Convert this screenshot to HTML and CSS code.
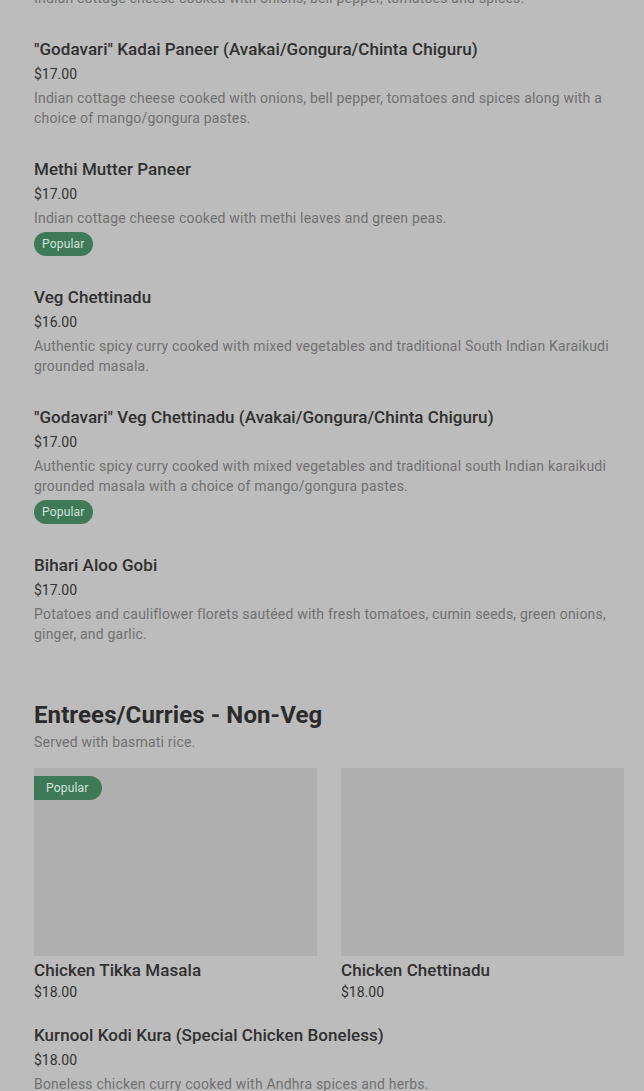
FILE: index.html
```html
<!DOCTYPE html>
<html lang="en">
<head>
    <meta charset="UTF-8">
    <meta name="viewport" content="width=device-width, initial-scale=1.0">
    <title>Menu</title>
    <link rel="stylesheet" href="styles.css">
</head>
<body>
    <main class="menu">
        <section class="category">
            <div class="item">
                <h3 class="item-title">Kadai Paneer</h3>
                <div class="item-price">$16.00</div>
                <p class="item-desc">Indian cottage cheese cooked with onions, bell pepper, tomatoes and spices.</p>
            </div>

            <div class="item">
                <h3 class="item-title">"Godavari" Kadai Paneer (Avakai/Gongura/Chinta Chiguru)</h3>
                <div class="item-price">$17.00</div>
                <p class="item-desc">Indian cottage cheese cooked with onions, bell pepper, tomatoes and spices along with a choice of mango/gongura pastes.</p>
            </div>

            <div class="item">
                <h3 class="item-title">Methi Mutter Paneer</h3>
                <div class="item-price">$17.00</div>
                <p class="item-desc">Indian cottage cheese cooked with methi leaves and green peas.</p>
                <span class="badge">Popular</span>
            </div>

            <div class="item">
                <h3 class="item-title">Veg Chettinadu</h3>
                <div class="item-price">$16.00</div>
                <p class="item-desc">Authentic spicy curry cooked with mixed vegetables and traditional South Indian Karaikudi grounded masala.</p>
            </div>

            <div class="item">
                <h3 class="item-title">"Godavari" Veg Chettinadu (Avakai/Gongura/Chinta Chiguru)</h3>
                <div class="item-price">$17.00</div>
                <p class="item-desc">Authentic spicy curry cooked with mixed vegetables and traditional south Indian karaikudi grounded masala with a choice of mango/gongura pastes.</p>
                <span class="badge">Popular</span>
            </div>

            <div class="item">
                <h3 class="item-title">Bihari Aloo Gobi</h3>
                <div class="item-price">$17.00</div>
                <p class="item-desc">Potatoes and cauliflower florets sautéed with fresh tomatoes, cumin seeds, green onions, ginger, and garlic.</p>
            </div>
        </section>

        <section class="category">
            <h2 class="category-title">Entrees/Curries - Non-Veg</h2>
            <p class="category-note">Served with basmati rice.</p>

            <div class="cards">
                <div class="card">
                    <div class="card-photo">
                        <span class="card-badge">Popular</span>
                    </div>
                    <h3 class="item-title">Chicken Tikka Masala</h3>
                    <div class="item-price">$18.00</div>
                </div>
                <div class="card">
                    <div class="card-photo"></div>
                    <h3 class="item-title">Chicken Chettinadu</h3>
                    <div class="item-price">$18.00</div>
                </div>
            </div>

            <div class="item item-after-cards">
                <h3 class="item-title">Kurnool Kodi Kura (Special Chicken Boneless)</h3>
                <div class="item-price">$18.00</div>
                <p class="item-desc">Boneless chicken curry cooked with Andhra spices and herbs.</p>
            </div>
        </section>
    </main>
</body>
</html>
```

FILE: styles.css
```css
body {
    font-family: Roboto, 'Liberation Sans', sans-serif;
    background-color: #bcbcbc;
    color: #2b2b2b;
    margin: 0;
    overflow: hidden;
}

/* list is scrolled: first item sits partly above the top edge */
.menu {
    padding: 0 20px 0 34px;
    margin-top: -63px;
}

.item {
    padding-bottom: 29px;
}

.item-title {
    margin: 0;
    font-size: 17px;
    line-height: 24px;
    font-weight: 500;
    letter-spacing: 0.05px;
    color: #303030;
}

.item-price {
    margin-top: 3px;
    font-size: 14px;
    line-height: 20px;
    color: #333;
}

.item-desc {
    margin: 4px 0 0;
    font-size: 14px;
    line-height: 20px;
    letter-spacing: 0.2px;
    color: #707070;
}

.badge {
    display: inline-block;
    margin-top: 4px;
    padding: 0 8px;
    height: 24px;
    line-height: 24px;
    border-radius: 12px;
    background-color: #3e7a58;
    color: #d3e3da;
    font-size: 12px;
    letter-spacing: 0.2px;
}

.category-title {
    margin: 26px 0 0;
    font-size: 24px;
    line-height: 32px;
    font-weight: 700;
    letter-spacing: 0.1px;
    color: #2b2b2b;
}

.category-note {
    margin: 1px 0 0;
    font-size: 14px;
    line-height: 20px;
    letter-spacing: 0.2px;
    color: #707070;
}

.cards {
    display: grid;
    grid-template-columns: 1fr 1fr;
    gap: 24px;
    margin-top: 16px;
}

.card-photo {
    position: relative;
    height: 188px;
    background-color: #afafaf;
}

.card .item-title {
    margin-top: 2px;
}

.card .item-price {
    margin-top: 0;
}

.card-badge {
    position: absolute;
    top: 8px;
    left: 0;
    padding: 0 13px 0 12px;
    height: 24px;
    line-height: 24px;
    border-radius: 0 12px 12px 0;
    background-color: #3e7a58;
    color: #d3e3da;
    font-size: 12px;
    letter-spacing: 0.2px;
}

.item-after-cards {
    margin-top: 21px;
}
```
